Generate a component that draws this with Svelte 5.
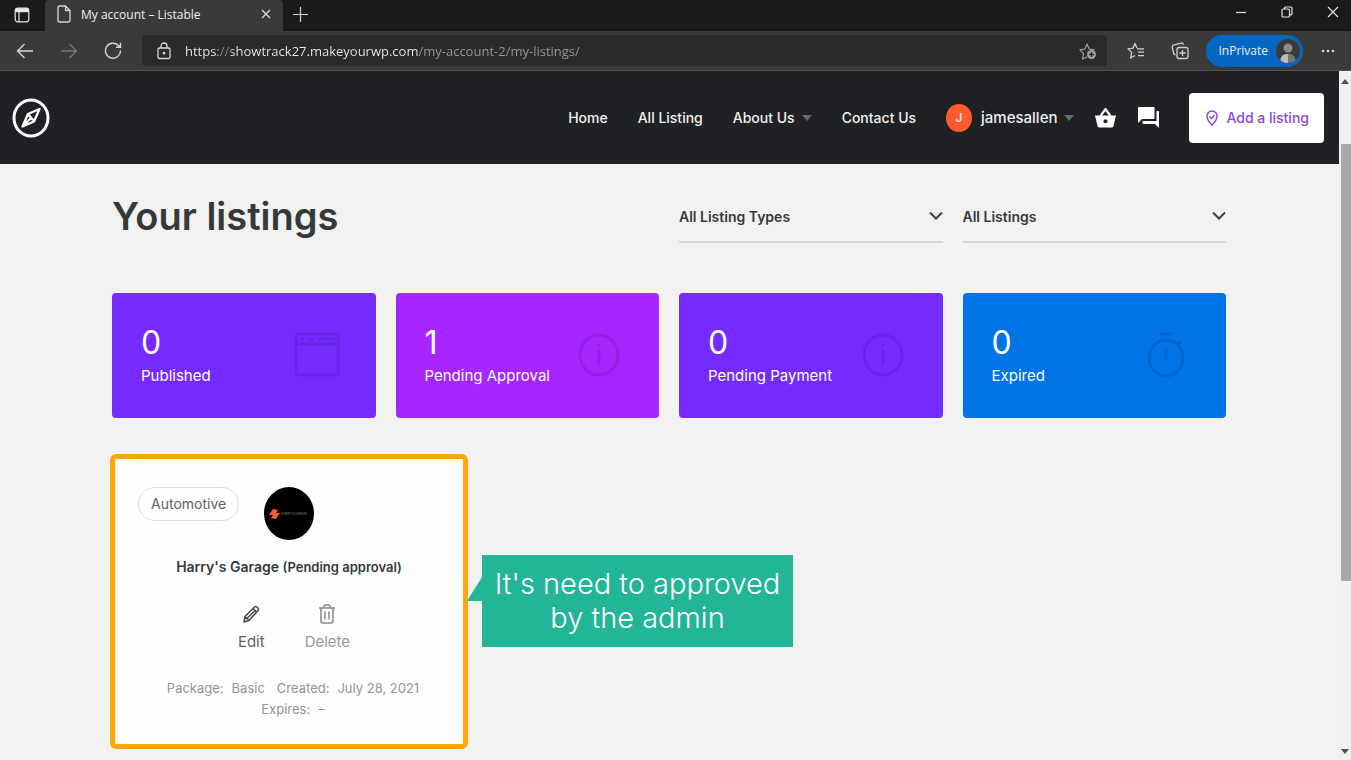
<script>
  let url = $state('https://showtrack27.makeyourwp.com/my-account-2/my-listings/');
  let listingType = $state('All Listing Types');
  let status = $state('All Listings');

  const stats = [
    { count: 0, label: 'Published', icon: 'window', tone: 'violet' },
    { count: 1, label: 'Pending Approval', icon: 'info', tone: 'magenta' },
    { count: 0, label: 'Pending Payment', icon: 'info', tone: 'violet' },
    { count: 0, label: 'Expired', icon: 'timer', tone: 'blue' },
  ];
</script>

{#snippet caret()}
  <svg class="caret" width="10" height="6" viewBox="0 0 10 6"><path d="M0 0h10L5 6z" fill="#66686b" /></svg>
{/snippet}

{#snippet chevron()}
  <svg class="chevron" width="14" height="10" viewBox="0 0 14 10" fill="none" stroke="#3a4145" stroke-width="2"><path d="M1 1.5l6 6 6-6" /></svg>
{/snippet}

<div class="window">
  <div class="tabs">
    <button class="tab-menu" aria-label="Tab actions menu">
      <svg width="16" height="16" viewBox="0 0 16 16" fill="none" stroke="#e8e8e8" stroke-width="1.2">
        <rect x="1.2" y="1.2" width="13.6" height="13.6" rx="2.5" />
        <path d="M5 5v10" />
        <path d="M1.5 3.2h13" stroke-width="4" />
      </svg>
    </button>
    <div class="tab">
      <svg width="14" height="18" viewBox="0 0 14 18" fill="none" stroke="#d8d8d8" stroke-width="1.3" stroke-linejoin="round">
        <path d="M2.5 1h6l4.5 4.5v10a1.5 1.5 0 0 1-1.5 1.5h-9A1.5 1.5 0 0 1 1 15.5v-13A1.5 1.5 0 0 1 2.5 1zM8.5 1v4.5H13" />
      </svg>
      <span class="tab-title">My account – Listable</span>
      <button aria-label="Close tab">
        <svg width="10" height="10" viewBox="0 0 10 10" stroke="#d8d8d8" stroke-width="1.4"><path d="M1 1l8 8M9 1L1 9" /></svg>
      </button>
    </div>
    <button class="new-tab" aria-label="New tab">
      <svg width="15" height="15" viewBox="0 0 15 15" stroke="#d8d8d8" stroke-width="1.2"><path d="M7.5 0v15M0 7.500h15" /></svg>
    </button>
    <div class="win-buttons">
      <button aria-label="Minimize">
        <svg width="12" height="12" viewBox="0 0 12 12" stroke="#e0e0e0" stroke-width="1.2"><path d="M1 6.5h10" /></svg>
      </button>
      <button aria-label="Restore">
        <svg width="12" height="12" viewBox="0 0 12 12" fill="none" stroke="#e0e0e0" stroke-width="1.2"><rect x="1" y="3" width="7.5" height="8" rx="1" /><path d="M3.5 3V1.800l.8-.8H10l1 1v6l-.8.8H8.500" /></svg>
      </button>
      <button aria-label="Close">
        <svg width="12" height="12" viewBox="0 0 12 12" stroke="#e0e0e0" stroke-width="1.2"><path d="M1 1l10 10M11 1L1 11" /></svg>
      </button>
    </div>
  </div>

  <div class="toolbar">
    <div class="history">
      <button aria-label="Back">
        <svg width="18" height="16" viewBox="0 0 18 16" fill="none" stroke="#d8d8d8" stroke-width="1.3"><path d="M17 8H1.500M8.500 1l-7 7 7 7" /></svg>
      </button>
      <button aria-label="Forward" disabled>
        <svg width="18" height="16" viewBox="0 0 18 16" fill="none" stroke="#767676" stroke-width="1.3"><path d="M1 8h15.500M9.500 1l7 7-7 7" /></svg>
      </button>
      <button aria-label="Refresh">
        <svg width="18" height="18" viewBox="0 0 18 18" fill="none" stroke="#d8d8d8" stroke-width="1.4"><path d="M16.500 8.500a7.500 7.500 0 1 1-2.300-5.200L16.200 5M16.500 .8V5.300H12" /></svg>
      </button>
    </div>
    <div class="address">
      <svg width="14" height="18" viewBox="0 0 14 18" fill="none" stroke="#d8d8d8" stroke-width="1.3"><rect x="1" y="6" width="12" height="10.500" rx="1.500" /><path d="M4 6V4a3 3 0 0 1 6 0v2" /><circle cx="7" cy="11.200" r=".7" fill="#d8d8d8" /></svg>
      <input type="text" aria-label="Address" bind:value={url} />
      <button aria-label="Add this page to favorites">
        <svg width="18" height="18" viewBox="0 0 18 18" fill="none" stroke="#a0a0a0" stroke-width="1.2"><path d="M8 15l-4.500 2 1-5.500L1 7.800l5-.8L8 2l2.200 5 5.300.8" stroke-linejoin="round" /><circle cx="12.500" cy="12.500" r="4.500" fill="#a0a0a0" stroke="none" /><path d="M12.500 10v5M10 12.500h5" stroke="#2a2a2a" stroke-width="1.3" /></svg>
      </button>
    </div>
    <div class="tools">
      <button aria-label="Favorites">
        <svg width="18" height="18" viewBox="0 0 18 18" fill="none" stroke="#d0d0d0" stroke-width="1.3" stroke-linejoin="round"><path d="M10 6L8 1.500 6 6.200l-5 .7 3.700 3.500-1 5.600L8 13.500M10 6.800h7M11 10.200h6M11 13.600h6" /></svg>
      </button>
      <button aria-label="Collections">
        <svg width="18" height="18" viewBox="0 0 18 18" fill="none" stroke="#d0d0d0" stroke-width="1.3"><rect x="6" y="5.500" width="11" height="11" rx="2" /><path d="M11.500 8v6M8.500 11h6M4.500 13l-1.700-1L1.200 5.200a2 2 0 0 1 1.300-2l7.500-2.100a1.800 1.800 0 0 1 2.300 1.700" /></svg>
      </button>
    </div>
    <button class="inprivate">
      InPrivate
      <svg width="24" height="24" viewBox="0 0 24 24">
        <defs><clipPath id="face"><circle cx="12" cy="12" r="12" /></clipPath></defs>
        <g clip-path="url(#face)"><rect width="24" height="24" fill="#3a3a3a" /><circle cx="12" cy="9" r="4.500" fill="#8c8c8c" /><path d="M4.500 24v-3a6 6 0 0 1 6-6h3a6 6 0 0 1 6 6v3z" fill="#777" /><path d="M4.500 24v-3a6 6 0 0 1 6-6H12v9z" fill="#bbb" /></g>
      </svg>
    </button>
    <button aria-label="Settings and more">
      <svg width="14" height="4" viewBox="0 0 14 4" fill="#e0e0e0"><circle cx="2" cy="2" r="1.3" /><circle cx="7" cy="2" r="1.3" /><circle cx="12" cy="2" r="1.3" /></svg>
    </button>
  </div>

  <div class="viewport">
    <div class="page">
      <header>
        <a class="logo" href="#home" aria-label="Listable">
          <svg width="38" height="40" viewBox="0 0 38 40" fill="none" stroke="#fff">
            <ellipse cx="19" cy="20" rx="17" ry="18" stroke-width="3" />
            <path d="M27.500 11L16 16 10.500 28.500 22 23.500zM16 16l6 7.500M10.500 28.500l8.500-8.500" stroke-width="2.300" stroke-linejoin="round" />
          </svg>
        </a>
        <nav>
          <a href="#home">Home</a>
          <a href="#listings">All Listing</a>
          <a href="#about">About Us {@render caret()}</a>
          <a href="#contact">Contact Us</a>
        </nav>
        <a class="user" href="#account"><span class="avatar">J</span>jamesallen {@render caret()}</a>
        <a class="quick" href="#cart" aria-label="Cart">
          <svg width="21" height="20" viewBox="0 0 21 20"><path d="M5.500 8l5-7 5 7" fill="none" stroke="#fff" stroke-width="2.2" /><path d="M0 7.500h21l-2.600 10.700a1.800 1.800 0 0 1-1.700 1.300H4.300a1.800 1.800 0 0 1-1.700-1.300z" fill="#fff" /><circle cx="10.500" cy="13.200" r="2" fill="#202124" /></svg>
        </a>
        <a class="quick" href="#messages" aria-label="Messages">
          <svg width="21" height="21" viewBox="0 0 21 21" fill="#fff"><path d="M1 0h14.500a1 1 0 0 1 1 1v10a1 1 0 0 1-1 1H4L0 16V1a1 1 0 0 1 1-1zM18.500 4H20a1 1 0 0 1 1 1v16l-4-4H5.500a1 1 0 0 1-1-1v-2h14z" /></svg>
        </a>
        <button class="add">
          <svg width="12" height="16" viewBox="0 0 12 16" fill="none" stroke="#8a45e0" stroke-width="1.4"><path d="M6 15C3.500 12.500 1 9.500 1 6.200A5 5 0 0 1 6 1a5 5 0 0 1 5 5.200C11 9.500 8.500 12.500 6 15zM3.500 6.500l2 2 3-3.500" /></svg>
          Add a listing
        </button>
      </header>

      <main>
        <div class="heading">
          <h1>Your listings</h1>
          <label class="filter">
            <select aria-label="Listing type" bind:value={listingType}>
              <option>All Listing Types</option>
            </select>
            {@render chevron()}
          </label>
          <label class="filter">
            <select aria-label="Listing status" bind:value={status}>
              <option>All Listings</option>
            </select>
            {@render chevron()}
          </label>
        </div>

        <div class="stats">
          {#each stats as stat}
            <div class="stat {stat.tone}">
              <div>
                <div class="count">{stat.count}</div>
                <div class="label">{stat.label}</div>
              </div>
              <svg width="46" height="48" viewBox="0 2 46 48" fill="none" stroke="#000" stroke-width="3">
                {#if stat.icon === 'window'}
                  <rect x="2" y="4" width="42" height="41" rx="2" />
                  <path d="M2 14h42M7 9h3M15 9h4M24 9h17" />
                {:else if stat.icon === 'info'}
                  <ellipse cx="22" cy="25" rx="19" ry="20" />
                  <path d="M22 20v15M22 14v3" />
                {:else}
                  <ellipse cx="22" cy="28" rx="17" ry="18" />
                  <path d="M16 4h12M34 14l3-3M22 19v10" />
                {/if}
              </svg>
            </div>
          {/each}
        </div>

        <article class="listing">
          <div class="top">
            <span class="type">Automotive</span>
            <svg width="50" height="53" viewBox="0 0 50 53">
              <ellipse cx="25" cy="26.500" rx="25" ry="26.500" fill="#000" />
              <path d="M9 22l5 1-2 3h4l-4 6-5-1 2-3H5z" fill="#f2603a" />
              <text x="17" y="28" font-size="3" fill="#8b8b8b">HARRY'S GARAGE</text>
            </svg>
          </div>
          <h2>Harry's Garage <small>(Pending approval)</small></h2>
          <div class="actions">
            <button class="edit">
              <svg width="18" height="20" viewBox="0 0 18 20" fill="none" stroke="#4b5053" stroke-width="1.6" stroke-linejoin="round"><path d="M2 18l1-5.500L12.500 3a1.700 1.700 0 0 1 2.500 0l1 1a1.700 1.700 0 0 1 0 2.500L7 16.500zM3 12.500l4 4M11 4.500l4 4M5 14.500l8-8" /></svg>
              Edit
            </button>
            <button class="delete">
              <svg width="18" height="20" viewBox="0 0 18 20" fill="none" stroke="#85888a" stroke-width="1.5"><path d="M1 4h16M6 4V2.500A1.500 1.500 0 0 1 7.500 1h3A1.500 1.500 0 0 1 12 2.500V4M3 4v13a2 2 0 0 0 2 2h8a2 2 0 0 0 2-2V4M7 7.500v8M11 7.500v8" /></svg>
              Delete
            </button>
          </div>
          <dl>
            <div><dt>Package:</dt><dd>Basic</dd></div>
            <div><dt>Created:</dt><dd>July 28, 2021</dd></div>
            <div><dt>Expires:</dt><dd>–</dd></div>
          </dl>
          <div class="callout">
            <svg width="15" height="24" viewBox="0 0 15 24"><path d="M15 0v24H0z" fill="#23b597" /></svg>
            It's need to approved by the admin
          </div>
        </article>
      </main>
    </div>

    <div class="scrollbar">
      <svg width="8" height="5" viewBox="0 0 8 5"><path d="M0 5l4-5 4 5z" fill="#505050" /></svg>
      <div class="track"><div class="thumb"></div></div>
      <svg width="8" height="5" viewBox="0 0 8 5"><path d="M0 0h8L4 5z" fill="#505050" /></svg>
    </div>
  </div>
</div>

<style>
  :global(body) {
    background: #f2f2f0;
  }

  .window {
    display: flex;
    flex-direction: column;
    min-height: 100vh;
    font-family: Inter, sans-serif;
    color: #34393c;
  }

  .window :is(button, input, select) {
    margin: 0;
    padding: 0;
    border: none;
    background: transparent;
    color: inherit;
    font: inherit;
    outline: none;
  }

  a {
    color: inherit;
    text-decoration: none;
  }

  svg {
    display: block;
    flex-shrink: 0;
  }

  /* Browser frame */
  .tabs,
  .toolbar {
    display: flex;
    align-items: center;
    color: #eee;
    font-family: "Open Sans", sans-serif;
    font-size: 12px;
  }

  .tabs {
    height: 31px;
    background: #1a1a1a;
  }

  .window .tab-menu {
    padding: 0 14px 2px;
  }

  .tab {
    display: flex;
    align-items: center;
    gap: 10px;
    box-sizing: border-box;
    width: 238px;
    height: 31px;
    margin-left: 1px;
    padding: 0 12px 3px;
    background: #3a3a3a;
    border-radius: 4px 4px 0 0;
  }

  .tab-title {
    flex: 1;
    white-space: nowrap;
  }

  .window .new-tab {
    padding: 0 10px 3px;
  }

  .win-buttons {
    display: flex;
    gap: 34px;
    margin-left: auto;
    padding: 0 12px 8px;
  }

  .toolbar {
    height: 40px;
    box-sizing: border-box;
    padding: 0 16px;
    background: #3a3a3a;
    border-bottom: 1px solid #505050;
  }

  .history {
    display: flex;
    gap: 26px;
    margin-right: 20px;
    align-items: center;
  }

  .address {
    display: flex;
    flex: 1;
    align-items: center;
    gap: 14px;
    height: 31px;
    padding: 0 10px 0 15px;
    background: #2a2a2a;
    border-radius: 4px;
  }

  /* dims everything but the scheme and the host name */
  .window .address input {
    flex: 1;
    font-size: 13px;
    color: transparent;
    caret-color: #fff;
    background: linear-gradient(to right, #eee 33px, #8a8a8a 33px 46px, #eee 46px 234px, #9a9a9a 234px);
    background-clip: text;
  }

  .tools {
    display: flex;
    gap: 26px;
    padding: 0 17px 0 20px;
  }

  .window .inprivate {
    display: flex;
    align-items: center;
    gap: 8px;
    height: 32px;
    margin-right: 18px;
    padding: 0 3px 0 12px;
    border-radius: 16px;
    background: #0567c4;
  }

  /* Site */
  .viewport {
    display: flex;
    flex: 1;
  }

  .page {
    flex: 1;
    min-width: 0;
  }

  header {
    display: flex;
    align-items: center;
    height: 93px;
    padding: 0 15px 0 12px;
    background: #202124;
    color: #f0f0f0;
    font-size: 15px;
    font-weight: 500;
    white-space: nowrap;
  }

  .logo {
    margin-right: auto;
  }

  nav {
    display: flex;
    gap: 30px;
    margin-right: 30px;
    font-size: 14px;
  }

  nav a,
  .user {
    display: flex;
    align-items: center;
    gap: 7px;
  }

  .user {
    margin-right: 21px;
  }

  .avatar {
    width: 26px;
    margin-right: 2px;
    border-radius: 50%;
    background: #ff5b2e;
    font-size: 12px;
    line-height: 28px;
    text-align: center;
  }

  .quick {
    margin-right: 22px;
  }

  .window .add {
    display: flex;
    align-items: center;
    gap: 8px;
    height: 50px;
    margin-left: 8px;
    padding: 0 15px 0 17px;
    border-radius: 4px;
    background: #fff;
    color: #8a45e0;
    font-size: 14px;
    font-weight: 500;
  }

  main {
    padding: 27px 113px 10px 112px;
  }

  .heading,
  .stats {
    display: grid;
    grid-template-columns: repeat(4, 1fr);
    gap: 20px;
  }

  h1 {
    grid-column: span 2;
    margin: 0;
    font-size: 38px;
    font-weight: 600;
    line-height: 50px;
  }

  .filter {
    display: grid;
    align-items: center;
    border-bottom: 2px solid #d6d6d5;
  }

  .filter > :global(*) {
    grid-area: 1 / 1;
  }

  .window .filter select {
    appearance: none;
    height: 50px;
    font-size: 14px;
    font-weight: 600;
  }

  .chevron {
    justify-self: end;
    pointer-events: none;
  }

  .stats {
    margin-top: 50px;
  }

  .stat {
    display: flex;
    align-items: center;
    justify-content: space-between;
    height: 125px;
    padding: 0 36px 0 29px;
    border-radius: 4px;
    color: #fff;
  }

  .stat svg {
    opacity: 0.1;
  }

  .violet {
    background: #752bff;
  }

  .magenta {
    background: #a725ff;
  }

  .blue {
    background: #0073e6;
  }

  .count {
    font-size: 32px;
    line-height: 40px;
  }

  .label {
    font-size: 15px;
    line-height: 26px;
  }

  .listing {
    position: relative;
    display: flex;
    flex-direction: column;
    align-items: center;
    box-sizing: border-box;
    width: 354px;
    margin-top: 38px;
    padding: 31px 26px 27px;
    background: #fefefe;
    border-radius: 4px;
    outline: 5px solid #ffa60d;
    outline-offset: -3px;
  }

  .top {
    display: grid;
    grid-template-columns: 1fr auto 1fr;
    align-items: start;
    width: 100%;
  }

  .type {
    justify-self: start;
    padding: 0 12px;
    border: 1px solid #dedede;
    border-radius: 17px;
    color: #5d6366;
    font-size: 14px;
    line-height: 32px;
  }

  h2 {
    margin: 14px 0 24px;
    font-size: 14px;
    font-weight: 600;
    line-height: 26px;
  }

  h2 small {
    font-size: 13px;
  }

  .actions {
    display: flex;
    gap: 40px;
    padding-left: 10px;
  }

  .actions button {
    display: flex;
    flex-direction: column;
    align-items: center;
    gap: 6px;
  }

  .window .actions button {
    font-size: 15px;
    line-height: 24px;
  }

  .window .edit {
    color: #5d6366;
  }

  .window .delete {
    color: #999;
  }

  dl {
    display: flex;
    flex-wrap: wrap;
    justify-content: center;
    gap: 0 12px;
    margin: 24px 0 0;
    padding-left: 8px;
    color: #929597;
    font-size: 13px;
    line-height: 21px;
  }

  dl div {
    display: flex;
    gap: 8px;
  }

  dd {
    margin: 0;
  }

  .callout {
    position: absolute;
    top: 99px;
    left: 370px;
    box-sizing: border-box;
    width: 311px;
    padding: 12px 10px;
    background: #23b597;
    color: #fff;
    font-size: 29px;
    font-weight: 300;
    line-height: 34px;
    text-align: center;
  }

  .callout svg {
    position: absolute;
    top: 22px;
    right: 100%;
  }

  .scrollbar {
    display: flex;
    flex-direction: column;
    align-items: center;
    gap: 6px;
    width: 12px;
    padding: 8px 0 6px;
    box-sizing: border-box;
    background: #f1f1f1;
  }

  .track {
    display: flex;
    flex-direction: column;
    flex: 1;
    width: 100%;
    padding-top: 54px;
    box-sizing: border-box;
  }

  .thumb {
    height: 73%;
    margin-left: 2px;
    background: #a8a8a8;
  }
</style>
